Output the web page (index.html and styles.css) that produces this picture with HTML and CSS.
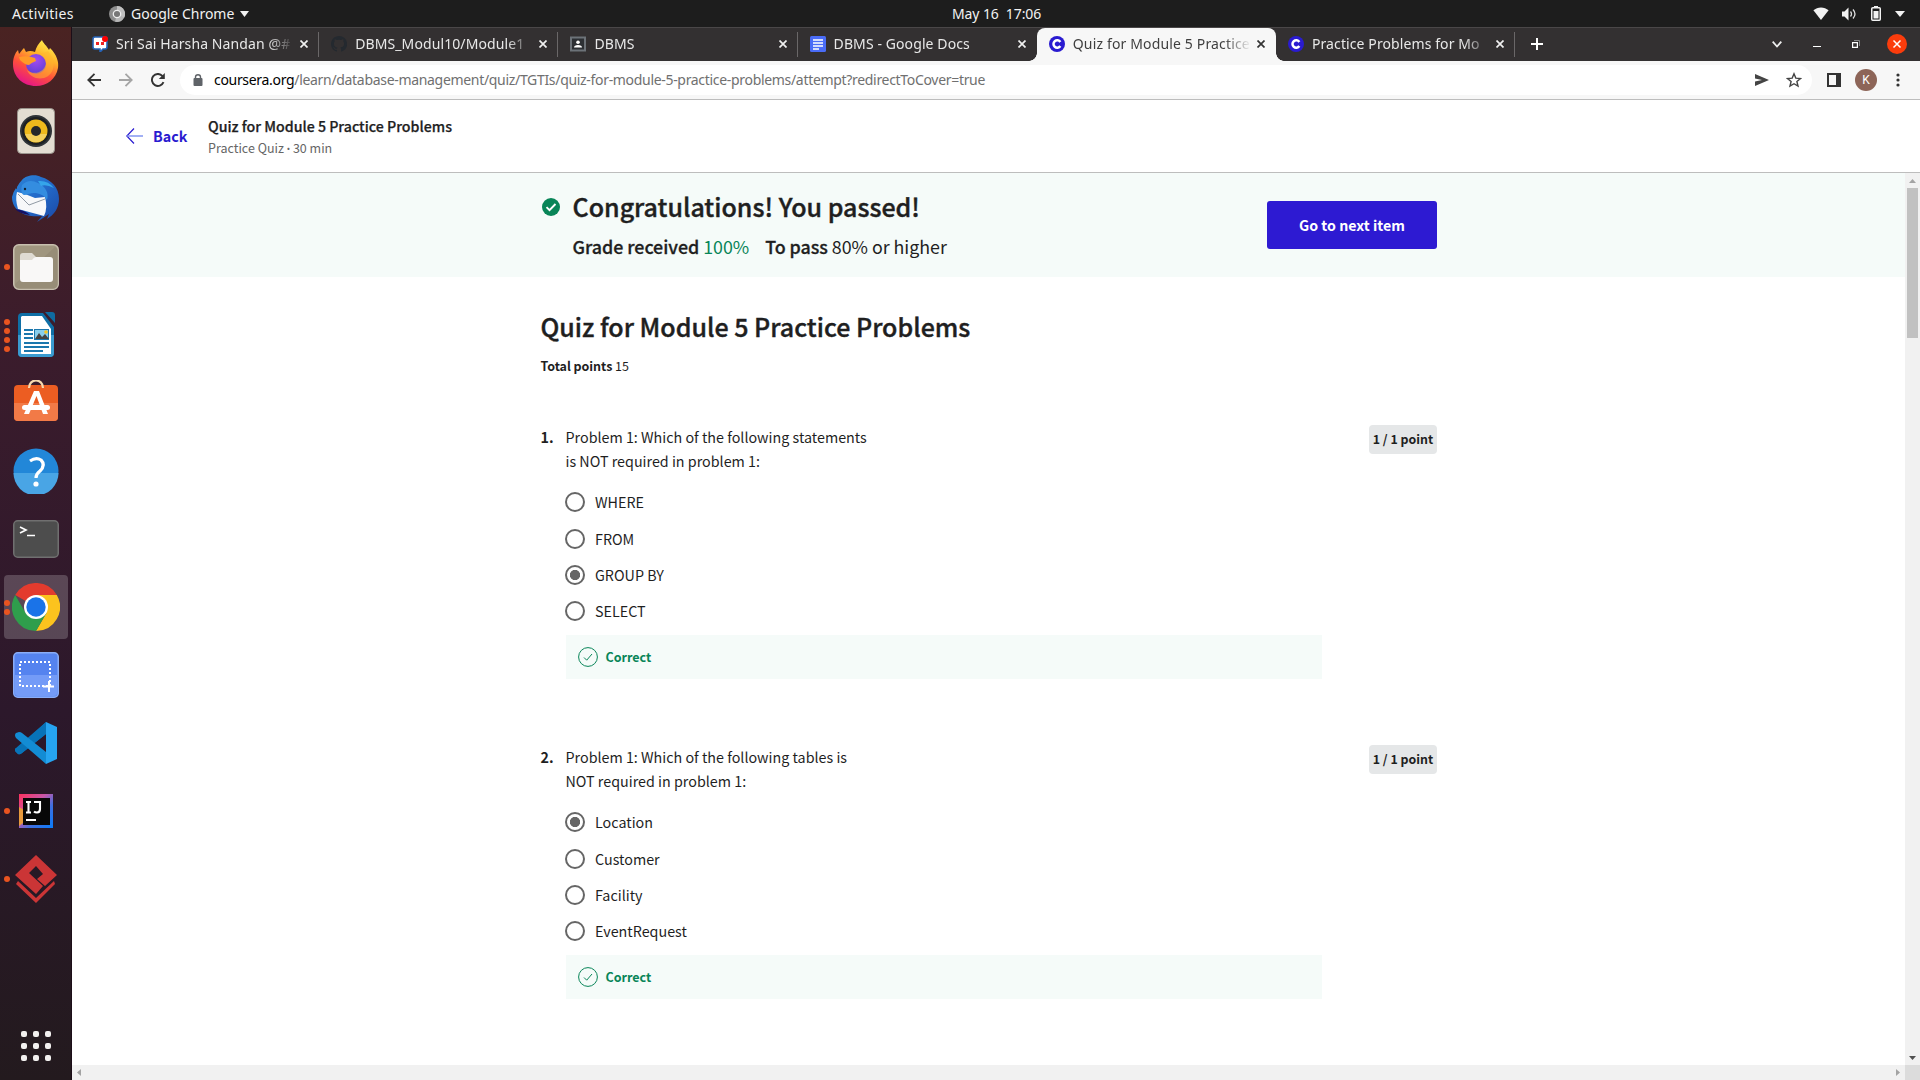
FILE: index.html
```html
<!DOCTYPE html>
<html lang="en">
<head>
<meta charset="utf-8">
<title>Quiz for Module 5 Practice Problems</title>
<link rel="stylesheet" href="styles.css">
</head>
<body>
<div class="topbar">
  <span class="activities">Activities</span>
  <span class="app-menu">
    <svg width="16" height="16" viewBox="0 0 16 16"><circle cx="8" cy="8" r="8" fill="#8d8d8d"/><path d="M8 8V0A8 8 0 0 1 15 12z" fill="#c0c0c0"/><path d="M8 8l7 4A8 8 0 0 1 6 15.700z" fill="#e0e0e0" opacity=".5"/><circle cx="8" cy="8" r="3.700" fill="#777" stroke="#eee" stroke-width="1.300"/></svg>
    <span class="app-name">Google Chrome</span>
    <svg width="9" height="6" viewBox="0 0 9 6"><path d="M0 0h9L4.500 6z" fill="#f2f2f2"/></svg>
  </span>
  <span class="clock">May 16&nbsp; 17:06</span>
  <span class="tray">
    <svg class="wifi" width="16" height="13" viewBox="0 0 16 13"><path d="M8 13L.4 3.300C4.500-.6 11.500-.6 15.600 3.300z" fill="#f2f2f2"/></svg>
    <svg width="16" height="14" viewBox="0 0 16 14"><path d="M1 4.500h2.500L7.500.5v13l-4-4H1z" fill="#f2f2f2"/><path d="M9.500 4.500q2 2.500 0 5M12 2.500q4 4.500 0 9" fill="none" stroke="#ddd" stroke-width="1.300"/></svg>
    <svg width="10" height="15" viewBox="0 0 10 15"><path d="M3 0h4v1.500H3z" fill="#f2f2f2"/><rect x=".75" y="1.750" width="8.500" height="12.500" rx="1" fill="none" stroke="#f2f2f2" stroke-width="1.500"/><path d="M2.500 5h5v7.500h-5z" fill="#f2f2f2"/></svg>
    <svg width="10" height="6" viewBox="0 0 10 6"><path d="M0 0h10L5 6z" fill="#f2f2f2"/></svg>
  </span>
</div>
<div class="desktop">
<nav class="dock">
  <div class="dock-item">
    <svg width="46" height="46" viewBox="0 0 46 46"><defs><linearGradient id="ff" x1=".8" y1="0" x2=".3" y2="1"><stop offset="0" stop-color="#fff44f"/><stop offset=".35" stop-color="#ffb12a"/><stop offset=".65" stop-color="#ff4f3b"/><stop offset="1" stop-color="#e3128c"/></linearGradient><radialGradient id="fp" cx=".5" cy=".3" r=".7"><stop offset="0" stop-color="#a44bf0"/><stop offset="1" stop-color="#5f3fd6"/></radialGradient></defs><path d="M29 0c1 3 5 6 7 10l1-2c7 7 9 14 8 20-2 11-11 18-22 18C10 46 0 37 0 24c0-6 2-11 5-14l1 4 4-5 1-1q1 2 2 4 4-2 9 0c1-5 4-9 7-12z" fill="url(#ff)"/><circle cx="23" cy="24" r="10" fill="url(#fp)"/><path d="M6 17q8-2 16 1l1 3q-5 2-7 4-4 0-9-5z" fill="#ff9a28"/><path d="M21 13c8-1 12 4 12 10-1 9-12 13-19 7 4 11 22 12 26-1 2-7-1-13-5-18-4 3-9 2-14 2z" fill="#ffb72e" opacity=".55"/></svg>
  </div>
  <div class="dock-item">
    <svg width="38" height="46" viewBox="0 0 38 46"><rect x=".5" y=".5" width="37" height="45" rx="4" fill="#e3ddd2" stroke="#9a958d"/><circle cx="19" cy="23" r="16" fill="#2f3438"/><circle cx="19" cy="23" r="14" fill="#1d2023"/><circle cx="19" cy="23" r="11.500" fill="#edb91c"/><path d="M8 26a11.500 11.500 0 0 0 22 0z" fill="#f3d05c"/><circle cx="19" cy="23" r="5" fill="#25282a"/></svg>
  </div>
  <div class="dock-item">
    <svg width="48" height="48" viewBox="0 0 48 48"><defs><linearGradient id="tb" x1="0" y1="0" x2="1" y2="1"><stop offset="0" stop-color="#2c86d8"/><stop offset=".5" stop-color="#2369c9"/><stop offset="1" stop-color="#1a48a5"/></linearGradient></defs><path d="M10 5C14 0 24-1 29 2c11 3 18 11 18 22 0 9-5 16-12 20l2-5-12 8 5-6C12 43 0 35 0 22q1-5 4-9 1 3 1-1 2-4 5-7z" fill="url(#tb)"/><path d="M5 17l8 2 10 4 10-1q3 11-1 19L6 34Q3 24 5 17z" fill="#f7f8fa"/><path d="M6 19l11 11 16-6" fill="none" stroke="#909aa5"/><path d="M3 34q10 1 15 6-10-1-15-6z" fill="#161063"/><path d="M10 10q7-7 16-2c8 4 11 10 9 17-3-5-8-7-13-7-4 0-7 2-10 2-3-1-3-6-2-10z" fill="#348de0"/><path d="M26 6q10-1 16 7-8-4-13-2z" fill="#35a5ea"/><circle cx="13" cy="14" r="1.200" fill="#123"/></svg>
  </div>
  <div class="dock-item">
    <span class="dots"><i></i></span>
    <svg width="46" height="46" viewBox="0 0 46 46"><rect x=".75" y=".75" width="44.500" height="44.500" rx="5" fill="#a0967f" stroke="#c7bfae" stroke-width="1.500"/><path d="M2 40L42 3q3 1 3 5v31q0 5-5 6H7q-5-1-5-5z" fill="#8e846f" opacity=".5"/><path d="M7 12q0-3 3-3h9l4 4v8H7z" fill="#dfdbd2"/><path d="M7 16h12q2-3 4-3h14q3 0 3 3v19q0 3-3 3H10q-3 0-3-3z" fill="#f9f8f7"/></svg>
  </div>
  <div class="dock-item">
    <span class="dots"><i></i><i></i><i></i><i></i></span>
    <svg width="38" height="46" viewBox="0 0 38 46"><path d="M5 1h21l11 14v26q0 4-4 4H5q-4 0-4-4V5q0-4 4-4z" fill="#0f6fa6"/><path d="M1 23h36v18q0 4-4 4H5q-4 0-4-4z" fill="#3a9bd0"/><path d="M5 4h20l9 13v25H5q-1 0-1-1V5z" fill="#fff"/><path d="M28 0h7q3 0 3 3v8z" fill="#0f6ba0"/><path d="M7 18h9M7 22h9M7 26h9M7 31h25M7 35h25M7 39h19" stroke="#1b77ad" stroke-width="2"/><rect x="17.500" y="17.500" width="14" height="10" fill="#88cfed" stroke="#1b77ad"/><path d="M18 27l4-6 3 4 3-3 4 5z" fill="#444"/><circle cx="29" cy="20" r="1.800" fill="#f7c520"/></svg>
  </div>
  <div class="dock-item">
    <svg width="46" height="46" viewBox="0 3 46 46"><rect x="1" y="8" width="44" height="36" rx="4" fill="#ec5d22"/><path d="M1 26h44v14q0 4-4 4H5q-4 0-4-4z" fill="#f27a47"/><path d="M16 11C16 1 30 1 30 11" fill="none" stroke="#f7d9ae" stroke-width="2.200"/><path d="M21 14h5l9 23h-5L23.500 19 16 37h-5z" fill="#fff"/><rect x="9" y="28" width="28" height="5" rx="2.500" fill="#fff"/></svg>
  </div>
  <div class="dock-item">
    <svg width="46" height="46" viewBox="0 0 46 46"><circle cx="23" cy="23" r="22.500" fill="#2287d8"/><path d="M.5 25a22.500 22.500 0 0 0 45 0z" fill="#49a5e5"/><path d="M17 13q6-4 11-1 5 5-1 11-4 3-4 7" fill="none" stroke="#fff" stroke-width="3.200"/><circle cx="23" cy="36" r="2.600" fill="#fff"/></svg>
  </div>
  <div class="dock-item">
    <svg width="46" height="38" viewBox="0 0 46 38"><rect x=".75" y=".75" width="44.500" height="36.500" rx="4" fill="#4d4d4d" stroke="#707070" stroke-width="1.500"/><path d="M7 7l6 3-6 3M14 15.500h8" fill="none" stroke="#fff" stroke-width="1.700"/></svg>
  </div>
  <div class="dock-item dock-active">
    <span class="dots"><i></i><i></i></span>
    <svg width="48" height="48" viewBox="0 0 48 48"><path d="M24 24L3.200 12A24 24 0 0 1 44.800 12z" fill="#e33b2e"/><path d="M24 12h20.800A24 24 0 0 1 24 48l10.400-18z" fill="#fcc31e"/><path d="M3.200 12A24 24 0 0 0 24 48l10.400-18-20.800 0z" fill="#2f9e4c"/><circle cx="24" cy="24" r="12" fill="#fff"/><circle cx="24" cy="24" r="9.700" fill="#1a73e8"/></svg>
  </div>
  <div class="dock-item">
    <svg width="46" height="46" viewBox="0 0 46 46"><rect x=".75" y=".75" width="44.500" height="44.500" rx="4" fill="#5583ef" stroke="#8aadf7" stroke-width="1.500"/><path d="M2 23h42v18q0 3-3 3H5q-3 0-3-3z" fill="#749bf7"/><path d="M7 10h30v24H7z" fill="none" stroke="#fff" stroke-width="2" stroke-dasharray="2 2"/><path d="M30 34.500h11M36 29v11" stroke="#fff" stroke-width="2"/></svg>
  </div>
  <div class="dock-item">
    <svg width="42" height="42" viewBox="0 0 42 42"><path d="M0 29l3 3q2 1 4-1L31 12V0z" fill="#0a6fb5"/><path d="M31 0v12L7 31q-2 2-4 1l-3-3q-1-2 1-3z" fill="#0873b8"/><path d="M1 11l3-1q2 0 3 1l24 19v12L1 16q-2-3 0-5z" fill="#138cd4"/><path d="M31 0l11 5v32l-11 5z" fill="#26a4f0"/></svg>
  </div>
  <div class="dock-item">
    <span class="dots"><i></i></span>
    <svg width="34" height="34" viewBox="0 0 34 34"><defs><linearGradient id="ij" x1="0" y1="0" x2="1" y2="1"><stop offset="0" stop-color="#fe315d"/><stop offset=".4" stop-color="#c757a8"/><stop offset=".65" stop-color="#3f6fe0"/><stop offset="1" stop-color="#087cfa"/></linearGradient></defs><path d="M0 0h34v34H0z" fill="url(#ij)"/><path d="M0 13l5 3-1 13-4 3z" fill="#e89a3c"/><path d="M4 4h27v27H4z" fill="#080808"/><path d="M7 8h5M9.500 8v10M7 18.500h5M15 8h6v7q0 3.500-3 3.500-2 0-3-1" fill="none" stroke="#fff" stroke-width="2.100"/><path d="M7 25h10v2H7z" fill="#fff"/></svg>
  </div>
  <div class="dock-item">
    <span class="dots"><i></i></span>
    <svg width="42" height="48" viewBox="0 0 42 48"><path d="M21 0l21 20-12 11-8-7 6-5-7-8-7 7 14 13-7 8L0 20z" fill="#cb3536"/><path d="M3 26l18 17 18-17 1 3-19 19L1 29z" fill="#cb3536"/></svg>
  </div>
  <div class="app-grid"><i></i><i></i><i></i><i></i><i></i><i></i><i></i><i></i><i></i></div>
</nav>
<main class="browser">
  <div class="tabstrip">
    <div class="tab">
      <svg width="16" height="16" viewBox="0 0 16 16"><path d="M1 3q0-2 2-2h10q2 0 2 2v8q0 2-2 2h-2l-3 3v-3H3q-2 0-2-2z" fill="#fff" stroke="#2563b8" stroke-width="1.600"/><rect x="4" y="6" width="3" height="3" fill="#e22"/><rect x="9" y="6" width="3" height="3" fill="#e22"/><circle cx="13" cy="3" r="3" fill="#f00"/></svg>
      <span class="tab-title">Sri Sai Harsha Nandan @#</span>
      <svg class="x" viewBox="0 0 8 8"><path d="M.5.5l7 7M7.500.5l-7 7"/></svg>
    </div>
    <div class="tab">
      <svg width="16" height="16" viewBox="0 0 16 16"><path d="M8 0C3.600 0 0 3.600 0 8c0 3.500 2.300 6.500 5.500 7.600.4.100.5-.2.500-.4v-1.400c-2.200.5-2.700-1-2.700-1-.4-.9-.9-1.200-.9-1.200-.7-.5.1-.5.100-.5.800.1 1.200.8 1.200.8.700 1.300 1.900.9 2.300.7.100-.5.300-.9.500-1.100-1.800-.2-3.600-.9-3.600-4 0-.9.300-1.600.8-2.100-.1-.2-.4-1 .1-2.100 0 0 .7-.2 2.200.8a7.500 7.500 0 0 1 4 0c1.500-1 2.200-.8 2.200-.8.400 1.100.2 1.900.1 2.100.5.600.8 1.300.8 2.100 0 3.100-1.900 3.700-3.700 3.900.3.300.6.800.6 1.500v2.300c0 .2.100.5.600.4A8 8 0 0 0 8 0z" fill="#24292f"/></svg>
      <span class="tab-title">DBMS_Modul10/Module1</span>
      <svg class="x" viewBox="0 0 8 8"><path d="M.5.5l7 7M7.500.5l-7 7"/></svg>
    </div>
    <div class="tab">
      <svg width="16" height="16" viewBox="0 0 16 16"><rect x="1" y="1.500" width="14" height="13" fill="#2d3034" stroke="#6c7278" stroke-width="2"/><circle cx="8" cy="6.300" r="1.800" fill="#fff"/><path d="M4 11.500q0-2.500 4-2.500t4 2.500z" fill="#fff"/></svg>
      <span class="tab-title">DBMS</span>
      <svg class="x" viewBox="0 0 8 8"><path d="M.5.5l7 7M7.500.5l-7 7"/></svg>
    </div>
    <div class="tab no-sep">
      <svg width="16" height="16" viewBox="0 0 16 16"><rect width="16" height="16" rx="1.500" fill="#4a6cf7"/><path d="M3 4h10M3 7h10M3 10h10M3 13h6" stroke="#fff" stroke-width="1.500"/></svg>
      <span class="tab-title">DBMS - Google Docs</span>
      <svg class="x" viewBox="0 0 8 8"><path d="M.5.5l7 7M7.500.5l-7 7"/></svg>
    </div>
    <div class="tab no-sep tab-active">
      <svg width="16" height="16" viewBox="0 0 16 16"><circle cx="8" cy="8" r="8" fill="#2a1bd0"/><path d="M11.300 6A3.700 3.700 0 1 0 11.300 10" fill="none" stroke="#fff" stroke-width="2.500"/></svg>
      <span class="tab-title">Quiz for Module 5 Practice</span>
      <svg class="x" viewBox="0 0 8 8"><path d="M.5.5l7 7M7.500.5l-7 7"/></svg>
    </div>
    <div class="tab">
      <svg width="16" height="16" viewBox="0 0 16 16"><circle cx="8" cy="8" r="8" fill="#2a1bd0"/><path d="M11.300 6A3.700 3.700 0 1 0 11.300 10" fill="none" stroke="#fff" stroke-width="2.500"/></svg>
      <span class="tab-title">Practice Problems for Mo</span>
      <svg class="x" viewBox="0 0 8 8"><path d="M.5.5l7 7M7.500.5l-7 7"/></svg>
    </div>
    <svg class="new-tab" width="12" height="12" viewBox="0 0 12 12"><path d="M6 0v12M0 6h12" stroke="#fff" stroke-width="2"/></svg>
    <div class="win-controls">
      <svg width="10" height="7" viewBox="0 0 10 7"><path d="M.7.7L5 5.500 9.300.7" fill="none" stroke="#eee" stroke-width="1.800"/></svg>
      <svg width="8" height="8" viewBox="0 0 8 8"><path d="M0 6.500h8" stroke="#fff" stroke-width="1"/></svg>
      <svg width="8" height="8" viewBox="0 0 8 8"><path d="M.6 2.600h4.800v4.800H.6z" fill="none" stroke="#fff" stroke-width="1.200"/><path d="M2 .5h5.500V6" fill="none" stroke="#888"/></svg>
      <svg class="close" width="20" height="20" viewBox="0 0 20 20"><circle cx="10" cy="10" r="10" fill="#fb3c0c"/><path d="M6.500 6.500l7 7M13.500 6.500l-7 7" stroke="#fff" stroke-width="1.500"/></svg>
    </div>
  </div>
  <div class="toolbar">
    <div class="nav-buttons">
      <svg width="14" height="14" viewBox="0 0 14 14"><path d="M14 7H1.500M7.500.8L1.300 7l6.200 6.200" fill="none" stroke="#333" stroke-width="1.800"/></svg>
      <svg width="14" height="14" viewBox="0 0 14 14"><path d="M0 7h12.500M6.500.8L12.700 7l-6.200 6.200" fill="none" stroke="#a5a5a5" stroke-width="1.800"/></svg>
      <svg width="14" height="14" viewBox="0 0 14 14"><path d="M12.500 9.200A6 6 0 1 1 11.300 2.800L12.500 4" fill="none" stroke="#333" stroke-width="1.900"/><path d="M13.800 0v6H7.800z" fill="#333"/></svg>
    </div>
    <div class="omnibox">
      <svg width="10" height="12" viewBox="0 0 10 12"><path d="M2.500 5V3q0-2.200 2.500-2.200T7.500 3v2" fill="none" stroke="#5f6368" stroke-width="1.400"/><rect x=".5" y="4" width="9" height="8" rx="1" fill="#5f6368"/></svg>
      <span class="url"><b>coursera.org</b>/learn/database-management/quiz/TGTIs/quiz-for-module-5-practice-problems/attempt?redirectToCover=true</span>
      <svg width="14" height="12" viewBox="0 0 14 12"><path d="M0 0l14 6-14 6V7.500L7 6 0 4.500z" fill="#444"/></svg>
      <svg width="16" height="16" viewBox="0 0 16 16"><path d="M8 1.800l1.800 4.300 4.700.4-3.600 3 1.100 4.600L8 11.700l-4 2.400 1.100-4.600-3.600-3 4.700-.4z" fill="none" stroke="#444" stroke-width="1.400"/></svg>
    </div>
    <div class="tools">
      <svg width="14" height="14" viewBox="0 0 14 14"><path d="M0 0h14v14H0zM2 2v10h7V2z" fill="#333" fill-rule="evenodd"/></svg>
      <span class="avatar">K</span>
      <svg width="4" height="14" viewBox="0 0 4 14"><circle cx="2" cy="2" r="1.600" fill="#333"/><circle cx="2" cy="7" r="1.600" fill="#333"/><circle cx="2" cy="12" r="1.600" fill="#333"/></svg>
    </div>
  </div>
  <header class="quiz-header">
    <svg width="17" height="16" viewBox="0 0 17 16"><path d="M8 .5L.8 8 8 15.500" fill="none" stroke="#2a1bd0" stroke-width="1.200"/><path d="M1 8h16" stroke="#7a8ff0" stroke-width="1.400"/></svg>
    <span class="back">Back</span>
    <div>
      <div class="quiz-name">Quiz for Module 5 Practice Problems</div>
      <div class="quiz-meta">Practice Quiz <span class="bullet">•</span> 30 min</div>
    </div>
  </header>
  <div class="viewport">
    <div class="page">
      <section class="banner">
        <svg class="pass-icon" width="18" height="18" viewBox="0 0 18 18"><circle cx="9" cy="9" r="9" fill="#088558"/><path d="M4.500 9.200l3 3L13.500 6" fill="none" stroke="#fff" stroke-width="1.900"/></svg>
        <div class="banner-text">
          <h1 class="congrats">Congratulations! You passed!</h1>
          <p class="grades"><span><b>Grade received</b> <em>100%</em></span><span><b>To pass</b> 80% or higher</span></p>
        </div>
        <button class="next">Go to next item</button>
      </section>
      <section class="quiz">
        <h2 class="quiz-title">Quiz for Module 5 Practice Problems</h2>
        <p class="total"><b>Total points</b> 15</p>
        <article class="question">
          <b class="num">1.</b>
          <div class="q-body">
            <p class="prompt">Problem 1: Which of the following statements<br>is NOT required in problem 1:</p>
            <div class="option"><i class="radio"></i>WHERE</div>
            <div class="option"><i class="radio"></i>FROM</div>
            <div class="option"><i class="radio on"></i>GROUP BY</div>
            <div class="option"><i class="radio"></i>SELECT</div>
            <div class="correct"><svg width="20" height="20" viewBox="0 0 20 20"><circle cx="10" cy="10" r="9.400" fill="none" stroke="#088558" stroke-width="1"/><path d="M6 10.500l2.700 2.700L14 7" fill="none" stroke="#088558" stroke-width="1"/></svg><span>Correct</span></div>
          </div>
          <span class="points">1 / 1 point</span>
        </article>
        <article class="question">
          <b class="num">2.</b>
          <div class="q-body">
            <p class="prompt">Problem 1: Which of the following tables is<br>NOT required in problem 1:</p>
            <div class="option"><i class="radio on"></i>Location</div>
            <div class="option"><i class="radio"></i>Customer</div>
            <div class="option"><i class="radio"></i>Facility</div>
            <div class="option"><i class="radio"></i>EventRequest</div>
            <div class="correct"><svg width="20" height="20" viewBox="0 0 20 20"><circle cx="10" cy="10" r="9.400" fill="none" stroke="#088558" stroke-width="1"/><path d="M6 10.500l2.700 2.700L14 7" fill="none" stroke="#088558" stroke-width="1"/></svg><span>Correct</span></div>
          </div>
          <span class="points">1 / 1 point</span>
        </article>
      </section>
    </div>
    <div class="vscroll">
      <svg width="7" height="4" viewBox="0 0 7 4"><path d="M0 4h7L3.500 0z" fill="#a3a3a3"/></svg>
      <div class="thumb"></div>
      <svg width="7" height="4" viewBox="0 0 7 4"><path d="M0 0h7L3.500 4z" fill="#505050"/></svg>
    </div>
    <div class="hscroll">
      <svg width="4" height="7" viewBox="0 0 4 7"><path d="M4 0v7L0 3.500z" fill="#a3a3a3"/></svg>
      <svg width="4" height="7" viewBox="0 0 4 7"><path d="M0 0v7l4-3.500z" fill="#a3a3a3"/></svg>
    </div>
    <div class="corner"></div>
  </div>
</main>
</div>
</body>
</html>
```
FILE: styles.css
```css
* { box-sizing: border-box; }
body {
  margin: 0;
  width: 1920px;
  height: 1080px;
  overflow: hidden;
  display: flex;
  flex-direction: column;
  background: #fff;
  color: #1f1f1f;
  font-family: "Noto Sans CJK SC", "Noto Sans", sans-serif;
}
svg { display: block; flex: none; }
h1, h2, p { margin: 0; }
b { font-weight: 700; }

/* GNOME panel */
.topbar {
  height: 27px;
  flex: none;
  display: grid;
  grid-template-columns: 109px 843px 90px 1fr;
  align-items: center;
  background: #1d1d1d;
  color: #f2f2f2;
  font: 14px/26px "Noto Sans", sans-serif;
}
.activities { padding-left: 12px; letter-spacing: .35px; }
.app-menu { display: flex; align-items: center; gap: 6px; }
.app-name { letter-spacing: 0; }
.clock { white-space: nowrap; letter-spacing: -.1px; }
.tray { display: flex; justify-content: flex-end; align-items: center; gap: 14px; padding-right: 15px; }
.wifi { margin-right: -2px; }

.desktop { flex: 1; min-height: 0; display: flex; }

/* Dock */
.dock {
  width: 72px;
  flex: none;
  padding-top: 2px;
  display: flex;
  flex-direction: column;
  background: linear-gradient(#4a2322, #3b1c2c 30%, #2c182b 65%, #231a1e);
  border-right: 1px solid #1c0e18;
}
.dock-item {
  position: relative;
  height: 68px;
  flex: none;
  display: flex;
  align-items: center;
  justify-content: center;
}
.dock-active::before {
  content: "";
  position: absolute;
  inset: 2px 3px 2px 4px;
  border-radius: 4px;
  background: rgba(255, 255, 255, .2);
}
.dock-active svg { position: relative; }
.dots {
  position: absolute;
  left: 4px;
  top: 0;
  height: 100%;
  display: flex;
  flex-direction: column;
  justify-content: center;
  gap: 3px;
  z-index: 1;
}
.dots i { width: 6px; height: 6px; border-radius: 50%; background: #e95420; }
.app-grid {
  margin: auto auto 19px;
  display: grid;
  grid-template-columns: repeat(3, 6px);
  gap: 6px;
}
.app-grid i { height: 6px; border-radius: 2px; background: #f2f0ef; }

/* Browser chrome */
.browser { flex: 1; min-width: 0; display: flex; flex-direction: column; }
.tabstrip {
  height: 34px;
  flex: none;
  display: flex;
  align-items: center;
  padding-left: 8px;
  background: #333031;
  border-top: 1px solid #4a4748;
}
.tab {
  width: 239.2px;
  height: 33px;
  flex: none;
  display: flex;
  align-items: center;
  padding: 0 11px 1px 12px;
  color: #e8e8e8;
  font: 14px/30px "Noto Sans", sans-serif;
  background: linear-gradient(#6a6768, #6a6768) right center / 1px 25px no-repeat;
}
.tab.no-sep { background: none; }
.tab-title {
  flex: 1;
  min-width: 0;
  margin: 0 5px 0 8px;
  white-space: nowrap;
  letter-spacing: .1px;
  -webkit-mask-image: linear-gradient(90deg, #000 152px, transparent 178px);
  mask-image: linear-gradient(90deg, #000 152px, transparent 178px);
}
.tab .x { width: 8px; height: 8px; fill: none; stroke: #f0f0f0; stroke-width: 1.7; }
.tab.tab-active { position: relative; background: #f7f7f7; color: #3f3f3f; border-radius: 8px 8px 0 0; }
.tab-active .x { stroke: #333; }
.tab-active::before, .tab-active::after {
  content: "";
  position: absolute;
  bottom: 0;
  width: 8px;
  height: 8px;
}
.tab-active::before { left: -8px; background: radial-gradient(circle at 0 0, transparent 7.5px, #f7f7f7 8px); }
.tab-active::after { right: -8px; background: radial-gradient(circle at 100% 0, transparent 7.5px, #f7f7f7 8px); }
.tab-active .tab-title { letter-spacing: .15px; }
.new-tab { margin-left: 16px; margin-bottom: 1px; }
.win-controls { margin-left: auto; padding: 0 13px 1px 0; display: flex; align-items: center; gap: 31px; }
.close { margin-left: -4px; }

.toolbar {
  height: 39px;
  flex: none;
  display: flex;
  align-items: center;
  background: #f7f7f7;
  border-bottom: 1px solid #bdbdbd;
}
.nav-buttons { width: 108px; padding-left: 15px; display: flex; gap: 18px; }
.omnibox {
  width: 1632px;
  height: 30px;
  padding: 0 10px 0 13px;
  display: flex;
  align-items: center;
  gap: 17px;
  border-radius: 15px;
  background: #fff;
}
.url { flex: 1; margin-left: -6px; font: 14px/28px "Noto Sans", sans-serif; color: #707070; letter-spacing: -.315px; white-space: nowrap; }
.url b { font-weight: 400; color: #000; }
.tools { flex: 1; padding: 0 20px 0 15px; display: flex; align-items: center; justify-content: space-between; }
.avatar {
  width: 22px;
  height: 22px;
  margin-right: 5px;
  border-radius: 50%;
  background: #8d6558;
  color: #fff;
  font: 12px/22px Roboto, sans-serif;
  text-align: center;
}

/* Quiz header */
.quiz-header {
  height: 73px;
  flex: none;
  display: flex;
  align-items: center;
  padding-left: 54px;
  border-bottom: 1px solid #bdbdbd;
}
.back { width: 55px; margin: 0 0 2px 10px; font-size: 14.3px; font-weight: 700; color: #2a1bd0; }
.quiz-name { font-size: 14.2px; line-height: 22px; font-weight: 500; white-space: nowrap; -webkit-text-stroke: .25px; }
.quiz-meta { font-size: 12.5px; line-height: 21px; color: #666; }
.bullet { font: 9px "Noto Sans", sans-serif; vertical-align: 1px; }

.viewport { flex: 1; min-height: 0; display: grid; grid-template: 1fr 15px / 1fr 15px; }
.page { overflow: hidden; }
.banner {
  height: 104px;
  padding: 0 468px 0 470px;
  display: flex;
  background: #f5fbf9;
}
.pass-icon { margin: 25px 12.5px 0 0; }
.banner-text { flex: 1; }
.congrats { margin-top: 15px; font-size: 25px; line-height: 36px; font-weight: 500; -webkit-text-stroke: .4px; }
.grades { display: flex; gap: 16px; margin-top: 8px; font-size: 17.85px; line-height: 28px; letter-spacing: -.03px; white-space: nowrap; }
.grades b { font-weight: 500; -webkit-text-stroke: .3px; }
.grades em { font-style: normal; color: #088558; }
.next {
  width: 170px;
  height: 48px;
  margin-top: 28px;
  padding: 0;
  border: 0;
  border-radius: 3px;
  background: #2d1ad2;
  color: #fff;
  font: 700 14.2px/48px "Noto Sans CJK SC", sans-serif;
}
.quiz { width: 896.5px; margin-left: 468.5px; }
.quiz-title { padding-top: 31px; font-size: 25px; line-height: 36px; font-weight: 500; -webkit-text-stroke: .4px; }
.total { margin-top: 11px; font-size: 12.5px; line-height: 22px; letter-spacing: -.05px; }
.question { display: flex; align-items: flex-start; height: 320px; }
.total + .question { margin-top: 48px; }
.num { width: 25px; font-size: 14.3px; line-height: 24px; }
.q-body { width: 756.5px; }
.prompt { margin-bottom: 11px; font-size: 14.32px; line-height: 24px; }
.option { height: 36px; display: flex; align-items: center; gap: 10px; margin-left: -.5px; font-size: 14.32px; line-height: 24px; }
.prompt + .option { margin-bottom: 1px; }
.radio { width: 20px; height: 20px; border: 2px solid #666; border-radius: 50%; }
.radio.on { background: radial-gradient(circle, #666 4.8px, transparent 5.4px); }
.correct {
  height: 44px;
  margin-top: 6px;
  padding-left: 12px;
  display: flex;
  align-items: center;
  gap: 8px;
  background: #f5fbf9;
  color: #088558;
  font-size: 12.5px;
  font-weight: 700;
}
.correct span { margin-bottom: 2px; }
.points {
  width: 68px;
  height: 29px;
  margin-left: auto;
  border-radius: 4px;
  background: #e5e7e8;
  font-size: 12.4px;
  line-height: 29px;
  font-weight: 700;
  text-align: center;
  white-space: nowrap;
}

/* Scrollbars */
.vscroll { display: flex; flex-direction: column; align-items: center; background: #f1f1f1; padding: 6px 0 5px; }
.thumb { width: 11px; height: 150px; margin: 5px 0 auto; background: #c1c1c1; }
.hscroll { display: flex; align-items: center; justify-content: space-between; padding: 0 5px; background: #f1f1f1; }
.corner { background: #dcdcdc; }
```
